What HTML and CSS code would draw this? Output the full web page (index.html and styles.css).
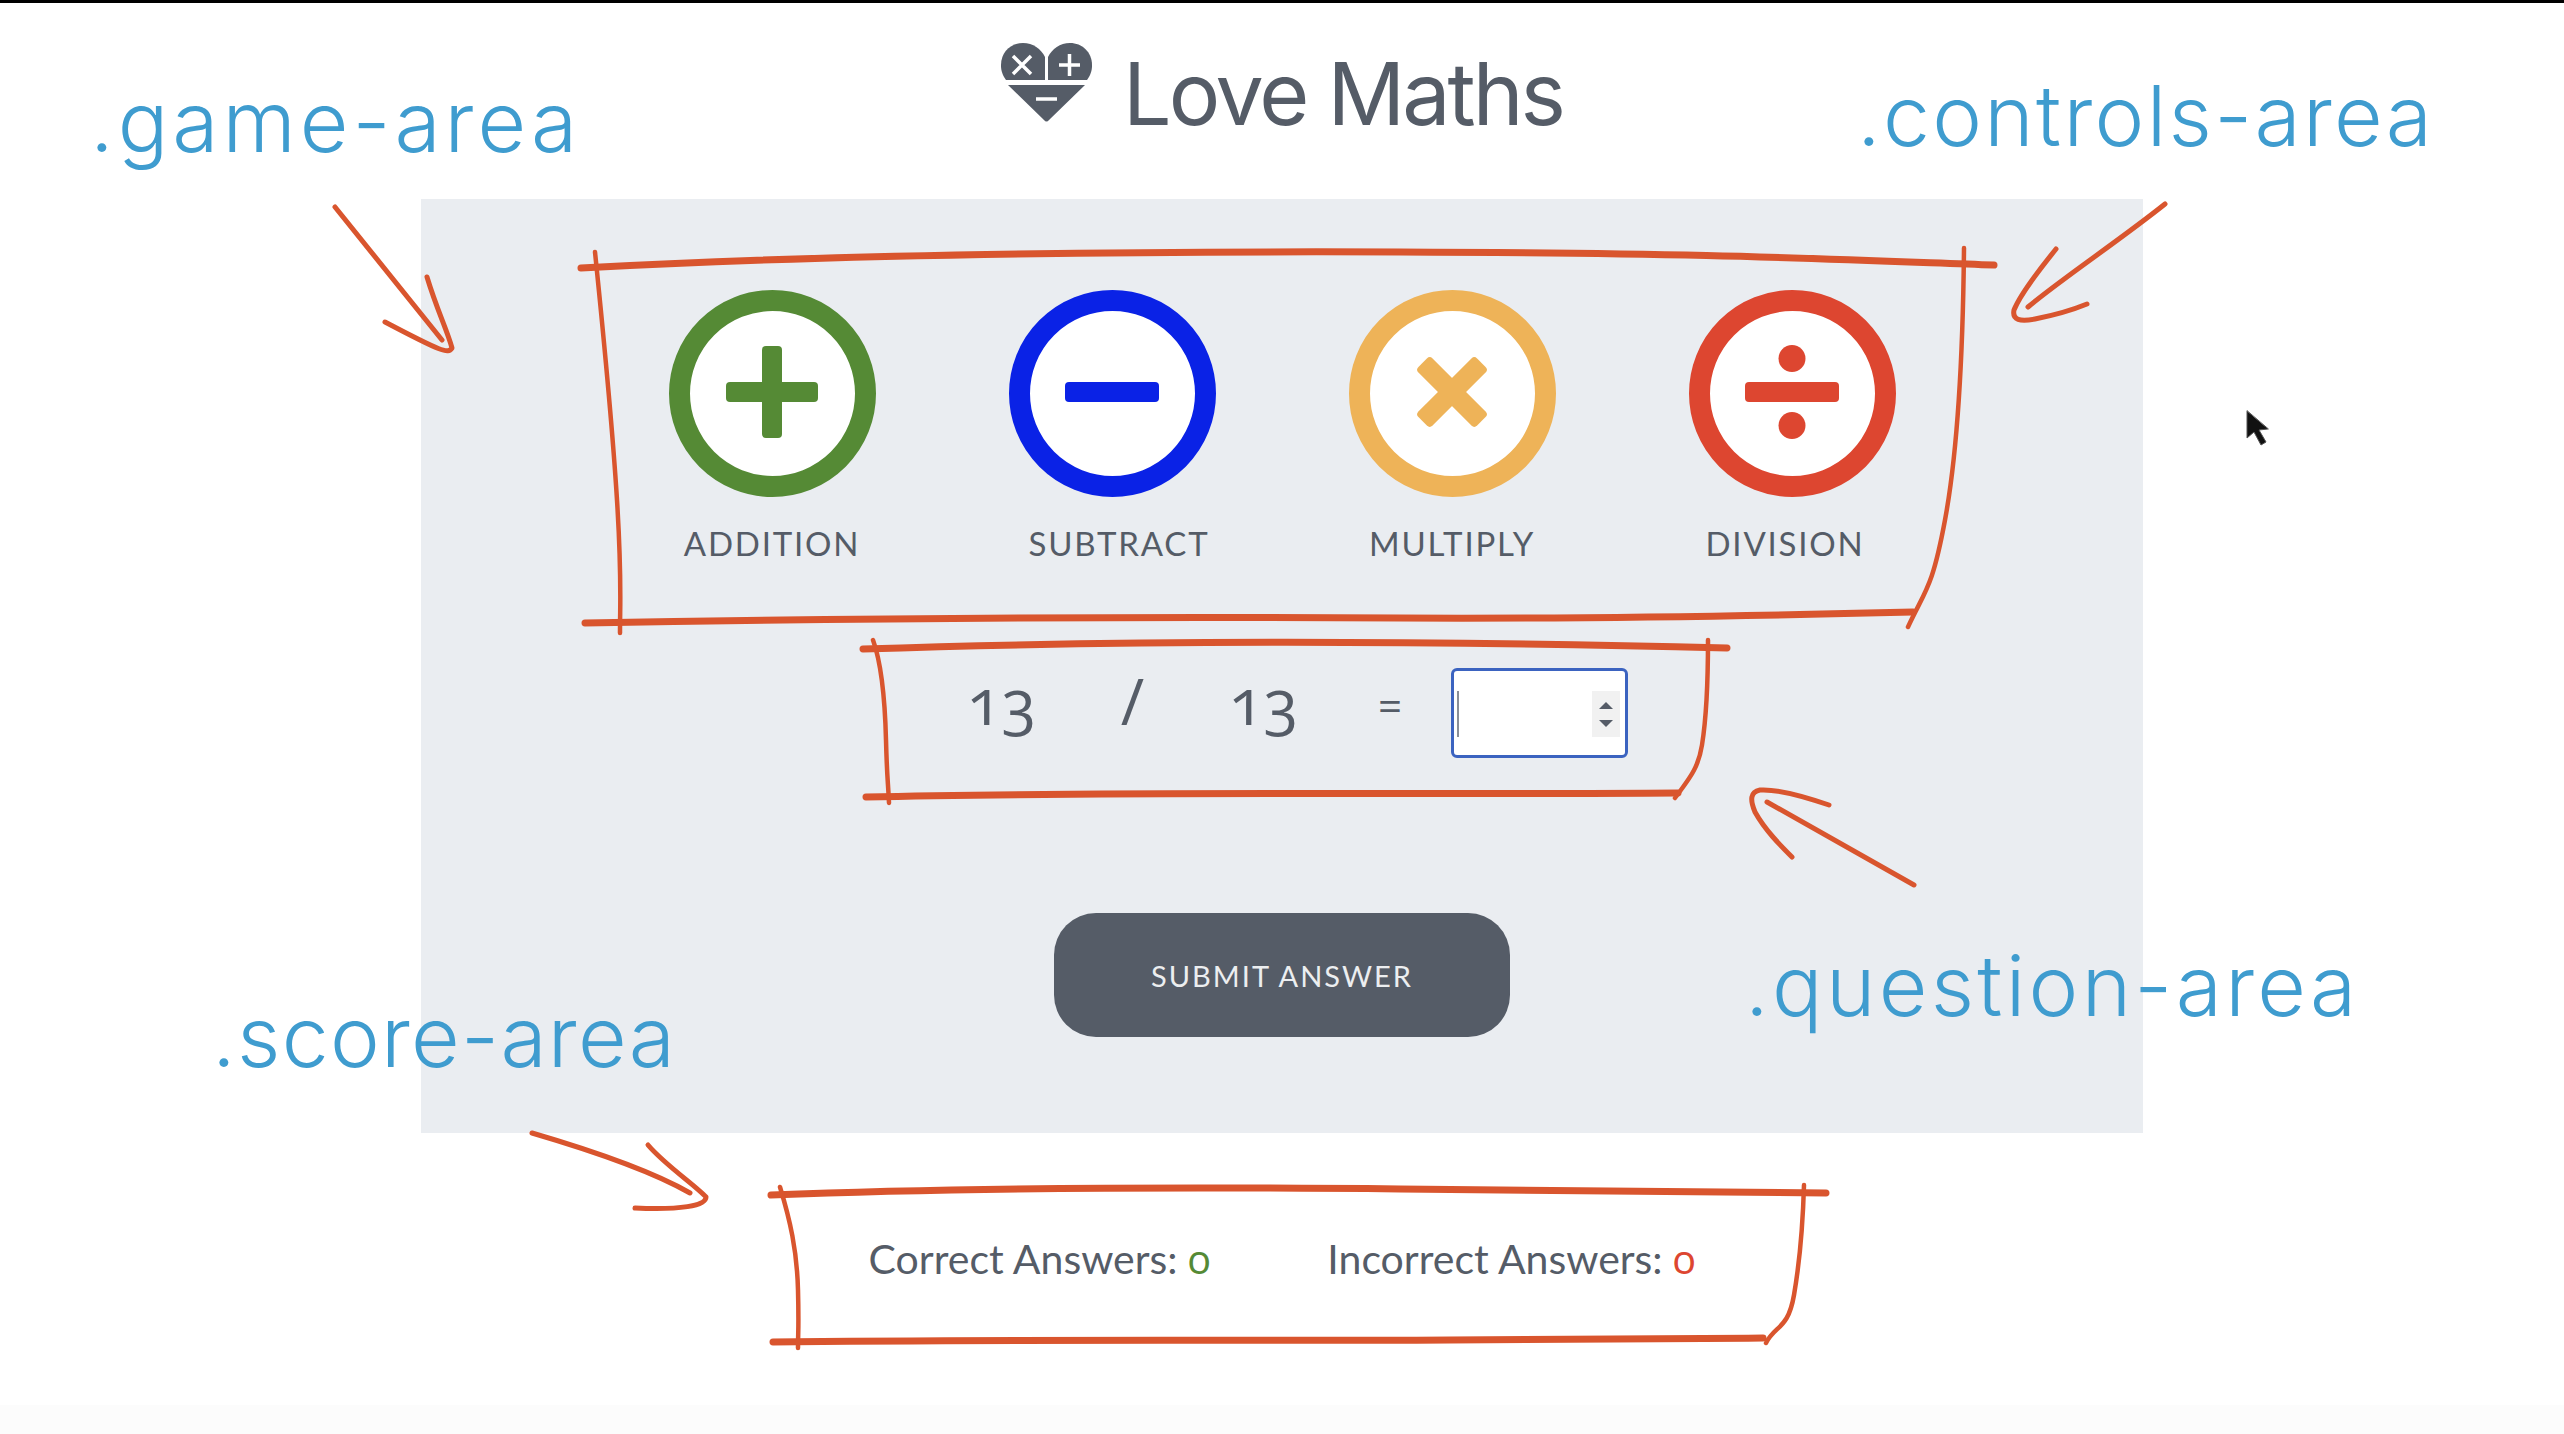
FILE: index.html
```html
<!DOCTYPE html>
<html lang="en">
<head>
  <meta charset="UTF-8">
  <title>Love Maths</title>
  <link rel="stylesheet" href="styles.css">
</head>
<body>

<header class="heading">
  <svg class="logo" viewBox="0 0 92 80" width="92" height="80">
    <path class="logo-fill" d="M5 37C0 30 0 25 0 22C0 9 10 0 22 0C32 0 40 6 44 14V37Z"/>
    <path class="logo-fill" d="M47 14C51 6 59 0 69 0C81 0 91 9 91 22C91 25 91 30 86 37H47Z"/>
    <path class="logo-fill" d="M7 42H84L48 77Q45.5 80 43 77Z"/>
    <path class="logo-mark" d="M12 13L30 31M30 13L12 31M58 22H79M68.500 11V33M35 56H56"/>
  </svg>
  <h1 class="title">Love Maths</h1>
</header>

<main class="game-area">
  <div class="controls-area">
    <div class="control">
      <div class="circle circle-add">
        <svg viewBox="0 0 100 100" width="100" height="100">
          <rect x="4" y="40" width="92" height="20" rx="4"/>
          <rect x="40" y="4" width="20" height="92" rx="4"/>
        </svg>
      </div>
      <span class="control-label">ADDITION</span>
    </div>
    <div class="control">
      <div class="circle circle-sub">
        <svg viewBox="0 0 100 100" width="100" height="100">
          <rect x="3" y="40" width="94" height="20" rx="4"/>
        </svg>
      </div>
      <span class="control-label nudge-right">SUBTRACT</span>
    </div>
    <div class="control">
      <div class="circle circle-mul">
        <svg viewBox="0 0 100 100" width="100" height="100">
          <rect x="8.500" y="40" width="83" height="20" rx="4" transform="rotate(45 50 50)"/>
          <rect x="8.500" y="40" width="83" height="20" rx="4" transform="rotate(-45 50 50)"/>
        </svg>
      </div>
      <span class="control-label">MULTIPLY</span>
    </div>
    <div class="control">
      <div class="circle circle-div">
        <svg viewBox="0 0 100 100" width="100" height="100">
          <rect x="3" y="40" width="94" height="20" rx="4"/>
          <circle cx="50" cy="16.500" r="13.500"/>
          <circle cx="50" cy="83.500" r="13.500"/>
        </svg>
      </div>
      <span class="control-label nudge-left">DIVISION</span>
    </div>
  </div>

  <div class="question-area">
    <span class="term">13</span>
    <span class="term">/</span>
    <span class="term">13</span>
    <span class="term term-equals">=</span>
    <div class="answer-box">
      <span class="caret"></span>
      <span class="spinner"><i class="spin-up"></i><i class="spin-down"></i></span>
    </div>
  </div>

  <button class="submit-btn">SUBMIT ANSWER</button>
</main>

<section class="score-area">
  <p class="score">Correct Answers: <span class="good">0</span></p>
  <p class="score">Incorrect Answers: <span class="bad">0</span></p>
</section>

<!-- teacher's notes drawn over the page -->
<span class="note note-game">.game-area</span>
<span class="note note-controls">.controls-area</span>
<span class="note note-question">.question-area</span>
<span class="note note-score">.score-area</span>

<svg class="ink" viewBox="0 0 2564 1434" width="2564" height="1434">
  <!-- controls box -->
  <path class="thick" d="M581 268C800 256 1100 251 1400 252S1800 258 1994 265"/>
  <path class="thin" d="M595 252C603 330 612 420 617 500S620 600 620 633"/>
  <path class="thick" d="M585 623C900 617 1200 617 1400 618S1750 616 1913 612"/>
  <path class="thin" d="M1964 248C1963 350 1958 450 1945 520S1925 590 1908 627"/>
  <!-- question box -->
  <path class="thick" d="M863 649C1100 641 1400 640 1727 648"/>
  <path class="thin" d="M873 640C882 665 885 700 886 740S888 780 889 803"/>
  <path class="thick" d="M866 797C1100 791 1400 795 1678 793"/>
  <path class="thin" d="M1708 640C1708 680 1706 720 1702 745S1688 780 1675 798"/>
  <!-- score box -->
  <path class="thick" d="M771 1195C950 1188 1200 1187 1400 1189S1700 1192 1826 1193"/>
  <path class="thin" d="M780 1187C790 1220 797 1250 798 1290S798 1330 798 1348"/>
  <path class="thick" d="M773 1342C1000 1339 1250 1341 1450 1340S1700 1339 1763 1338"/>
  <path class="thin" d="M1804 1185C1803 1220 1800 1260 1794 1295S1775 1325 1766 1343"/>
  <!-- arrows -->
  <path class="arrow" d="M335 207L442 340"/>
  <path class="arrow" d="M427 277C437 310 447 330 452 348C448 354 442 352 385 322"/>
  <path class="arrow" d="M2165 204C2120 240 2060 280 2028 307"/>
  <path class="arrow" d="M2056 249C2035 275 2020 295 2014 310C2012 320 2020 322 2035 319C2055 315 2070 311 2087 304"/>
  <path class="arrow" d="M1914 885L1767 802"/>
  <path class="arrow" d="M1829 805C1800 795 1775 789 1760 790C1750 792 1750 800 1755 812C1765 830 1780 845 1792 857"/>
  <path class="arrow" d="M532 1133C590 1150 650 1170 690 1193"/>
  <path class="arrow" d="M648 1145C665 1165 695 1185 706 1197C706 1206 680 1210 635 1208"/>
  <!-- mouse pointer -->
  <path class="pointer" d="M2247 411V438L2254 432L2261 445L2266 442L2259 430L2268 429Z"/>
</svg>

</body>
</html>
```

FILE: styles.css
```css
* {
  box-sizing: border-box;
}
body {
  margin: 0;
  min-height: 100vh;
  border-top: 3px solid #000;
  background: linear-gradient(#fff 1405px, #fcfcfc 1405px);
  color: #555c67;
  font-family: "Lato", sans-serif;
  position: relative;
  overflow: hidden;
}
.heading {
  height: 196px;
  display: flex;
  justify-content: center;
  gap: 30px;
}
.logo {
  margin-top: 40px;
}
.logo-fill {
  fill: #555c67;
}
.logo-mark {
  fill: none;
  stroke: #fff;
  stroke-width: 3.500;
}
.title {
  margin: 41px 0 0;
  font-family: "Inter", sans-serif;
  font-size: 86px;
  line-height: 100px;
  font-weight: 400;
  letter-spacing: -3px;
}
.game-area {
  width: 1722px;
  margin: 0 auto;
  padding: 91px 0 96px;
  background: #eaedf1;
  display: flex;
  flex-direction: column;
  align-items: center;
}
.controls-area {
  display: flex;
  gap: 133px;
}
.control {
  width: 207px;
  display: flex;
  flex-direction: column;
  align-items: center;
}
.circle {
  width: 207px;
  height: 207px;
  border-radius: 50%;
  border: 21px solid;
  background: #fff;
  display: flex;
  align-items: center;
  justify-content: center;
}
.circle svg {
  margin-bottom: 3px;
  fill: currentColor;
}
.circle-add {
  color: #558a35;
}
.circle-sub {
  color: #0a22e6;
}
.circle-mul {
  color: #eeb358;
}
.circle-div {
  color: #dd4630;
}
.control-label {
  margin-top: 26px;
  font-size: 33px;
  line-height: 40px;
  letter-spacing: 1.800px;
  white-space: nowrap;
}
.nudge-right {
  margin-left: 14px;
}
.nudge-left {
  margin-right: 14px;
}
.question-area {
  margin-top: 105px;
  height: 90px;
  display: flex;
  align-items: center;
}
.term {
  width: 131px;
  padding-bottom: 24px;
  text-align: center;
  font-family: "Open Sans", sans-serif;
  font-size: 64px;
  line-height: 50px;
  font-weight: 400;
  font-variant-numeric: oldstyle-nums;
}
.term-equals {
  width: 122px;
  padding-bottom: 16px;
  font-size: 42px;
}
.answer-box {
  width: 177px;
  height: 90px;
  background: #fff;
  border: 3px solid #3b63c0;
  border-radius: 6px;
  padding: 20px 5px 18px 3px;
  display: flex;
  justify-content: space-between;
}
.caret {
  width: 2px;
  background: #8a8f97;
}
.spinner {
  width: 28px;
  background: #f1f1f1;
  display: flex;
  flex-direction: column;
  align-items: center;
  justify-content: center;
  gap: 11px;
}
.spin-up,
.spin-down {
  border-left: 7px solid transparent;
  border-right: 7px solid transparent;
}
.spin-up {
  border-bottom: 7px solid #555c67;
}
.spin-down {
  border-top: 7px solid #555c67;
}
.submit-btn {
  margin-top: 155px;
  width: 456px;
  height: 124px;
  border: none;
  border-radius: 42px;
  background: #555c67;
  color: #eceef0;
  font-family: "Lato", sans-serif;
  font-size: 29px;
  letter-spacing: 2px;
}
.score-area {
  margin-top: 100px;
  display: flex;
  justify-content: center;
  gap: 117px;
}
.score {
  margin: 0;
  font-size: 41px;
  line-height: 50px;
}
.good,
.bad {
  font-family: "Open Sans", sans-serif;
  font-variant-numeric: oldstyle-nums;
}
.good {
  color: #558a35;
}
.bad {
  color: #dd4630;
}
.note {
  position: absolute;
  font-family: "Inter", sans-serif;
  font-size: 84px;
  font-weight: 300;
  line-height: 1;
  color: #3f9ccf;
  white-space: nowrap;
}
.note-game {
  left: 90px;
  top: 77px;
  letter-spacing: 4px;
}
.note-controls {
  left: 1857px;
  top: 71px;
  letter-spacing: 2.300px;
}
.note-question {
  left: 1745px;
  top: 941px;
  letter-spacing: 3.300px;
}
.note-score {
  left: 212px;
  top: 992px;
  letter-spacing: 1.300px;
}
.ink {
  position: absolute;
  left: 0;
  top: -3px;
  pointer-events: none;
}
.ink path {
  fill: none;
  stroke: #d9552e;
  stroke-linecap: round;
  stroke-linejoin: round;
}
.ink .thick {
  stroke-width: 7;
}
.ink .thin {
  stroke-width: 4.500;
}
.ink .arrow {
  stroke-width: 5;
}
.ink .pointer {
  fill: #111;
  stroke: #555;
  stroke-width: 1;
}
```
